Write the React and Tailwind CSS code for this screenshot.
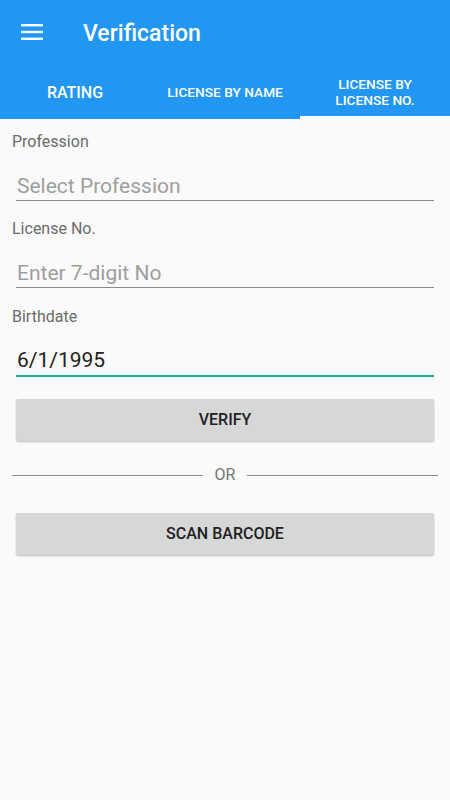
import React from 'react';

const App = () => {
  return (
    <div className="w-[450px] h-[800px] bg-[#fafafa] overflow-hidden" style={{ fontFamily: 'Roboto, "Liberation Sans", sans-serif' }}>
      {/* App bar */}
      <div className="bg-[#2196f3] text-white">
        <div className="h-[66px] flex items-center">
          <div className="w-[83px] pl-[21px] -mt-[2px]">
            <svg width="22" height="16" viewBox="0 0 22 16">
              <rect x="0" y="0" width="22" height="2.4" fill="#fff" />
              <rect x="0" y="6.8" width="22" height="2.4" fill="#fff" />
              <rect x="0" y="13.6" width="22" height="2.4" fill="#fff" />
            </svg>
          </div>
          <span className="text-[23px] font-medium mt-[3px]">Verification</span>
        </div>
        <div className="h-[53px] flex">
          <div className="flex-1 flex items-center justify-center text-[16px] font-medium">RATING</div>
          <div className="flex-1 flex items-center justify-center text-[13.7px] font-medium">LICENSE BY NAME</div>
          <div className="flex-1 flex flex-col justify-between">
            <div className="flex-1 flex items-center justify-center text-center text-[13.7px] font-medium leading-[16px] pt-[2px]">
              LICENSE BY<br />LICENSE NO.
            </div>
            <div className="h-[3px] bg-white" />
          </div>
        </div>
      </div>

      {/* Form */}
      <div className="px-[12px] pt-[14px]">
        <div className="text-[16px] text-[#6b6b6b] leading-[18px]">Profession</div>
        <div className="mx-[4px] mt-[23px] border-b border-[#8a8a8a] pb-[2px] text-[21px] leading-[24px] text-[#9e9e9e] pl-[1px]">Select Profession</div>

        <div className="mt-[19px] text-[16px] text-[#6b6b6b] leading-[18px]">License No.</div>
        <div className="mx-[4px] mt-[23px] border-b border-[#8a8a8a] pb-[2px] text-[21px] leading-[24px] text-[#9e9e9e] pl-[1px]">Enter 7-digit No</div>

        <div className="mt-[20px] text-[16px] text-[#6b6b6b] leading-[18px]">Birthdate</div>
        <div className="mx-[4px] mt-[22px] border-b-2 border-[#26a69a] pb-[3px] text-[21px] leading-[24px] text-[#212121] pl-[1px]">6/1/1995</div>

        <button className="block mx-[4px] mt-[22px] w-[418px] h-[42px] bg-[#d6d7d7] rounded-[2px] shadow-[0_1px_2px_rgba(0,0,0,0.25)] text-[16px] font-medium text-[#212121]">
          VERIFY
        </button>

        <div className="mt-[24px] h-[20px] flex items-center gap-[12px]">
          <div className="flex-1 h-px bg-[#8a8a8a]" />
          <span className="text-[16px] text-[#757575]">OR</span>
          <div className="flex-1 h-px bg-[#8a8a8a]" />
        </div>

        <button className="block mx-[4px] mt-[28px] w-[418px] h-[42px] bg-[#d6d7d7] rounded-[2px] shadow-[0_1px_2px_rgba(0,0,0,0.25)] text-[16px] font-medium text-[#212121]">
          SCAN BARCODE
        </button>
      </div>
    </div>
  );
};

export default App;
